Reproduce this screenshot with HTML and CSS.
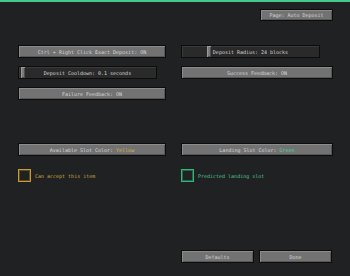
FILE: index.html
```html
<!doctype html>
<html>
<head>
<meta charset="utf-8">
<link rel="stylesheet" href="styles.css">
<title>Auto Deposit</title>
</head>
<body>
<div class="screen">
    <div class="top">
        <button class="btn page">Page: Auto Deposit</button>
    </div>

    <div class="options">
        <button class="btn">Ctrl + Right Click Exact Deposit: ON</button>
        <div class="slider short"><span class="knob knob-radius"></span><span class="label">Deposit Radius: 24 blocks</span></div>
        <div class="slider short"><span class="knob"></span><span class="label">Deposit Cooldown: 0.1 seconds</span></div>
        <button class="btn">Success Feedback: ON</button>
        <button class="btn">Failure Feedback: ON</button>
    </div>

    <div class="colors">
        <button class="btn">Available Slot Color: <span class="yellow">Yellow</span></button>
        <button class="btn">Landing Slot Color: <span class="green">Green</span></button>
        <div class="legend"><span class="box box-yellow"></span><span class="yellow-dim">Can accept this item</span></div>
        <div class="legend"><span class="box box-green"></span><span class="green-dim">Predicted landing slot</span></div>
    </div>

    <div class="bottom">
        <button class="btn small">Defaults</button>
        <button class="btn small">Done</button>
    </div>
</div>
</body>
</html>
```

FILE: styles.css
```css
html, body {
    margin: 0;
    padding: 0;
}
body {
    background-color: #202122;
    font-family: "DejaVu Sans Mono", "Liberation Mono", monospace;
    font-size: 5px;
    color: #d4d4d4;
}
.screen {
    width: 350px;
    height: 276px;
    box-sizing: border-box;
    border-top: 2px solid #45c98e;
    padding: 0 17px 0 18px;
    position: relative;
}
.btn {
    display: flex;
    align-items: center;
    justify-content: center;
    box-sizing: border-box;
    height: 13px;
    margin: 0;
    padding: 0;
    font-family: inherit;
    font-size: 5px;
    color: #d6d6d6;
    background-color: #727272;
    border: 1px solid #0c0c0c;
    box-shadow: inset 1px 1px 0 #8c8c8c, inset -1px -1px 0 #575757;
    white-space: pre;
}
.top {
    display: flex;
    justify-content: flex-end;
    margin-top: 7px;
}
.page {
    width: 73px;
    height: 12px;
}
.options {
    display: grid;
    grid-template-columns: 148px 152px;
    column-gap: 15px;
    row-gap: 8px;
    margin-top: 24px;
}
.slider {
    position: relative;
    display: flex;
    align-items: center;
    justify-content: center;
    box-sizing: border-box;
    height: 13px;
    width: 139px;
    background-color: #2a2a2b;
    border: 1px solid #0c0c0c;
    box-shadow: inset 1px 1px 0 #3a3a3a;
    color: #d6d6d6;
}
.knob {
    position: absolute;
    left: 2px;
    top: 0;
    width: 4px;
    height: 11px;
    background-color: #7a7a7a;
    box-shadow: inset 1px 1px 0 #9a9a9a, inset -1px -1px 0 #4e4e4e;
}
.knob-radius {
    left: 25px;
}
.colors {
    display: grid;
    grid-template-columns: 148px 152px;
    column-gap: 15px;
    row-gap: 13px;
    margin-top: 43px;
}
.legend {
    display: flex;
    align-items: center;
    gap: 4px;
    height: 13px;
}
.box {
    box-sizing: border-box;
    width: 13px;
    height: 13px;
    border-width: 1px;
    border-style: solid;
}
.box-yellow {
    border-color: #c99a2c;
    box-shadow: inset 0 0 0 1px rgba(201, 154, 44, 0.35);
}
.box-green {
    border-color: #2fb878;
    box-shadow: inset 0 0 0 1px rgba(47, 184, 120, 0.45);
}
.yellow {
    color: #dcb545;
}
.green {
    color: #4fd394;
}
.yellow-dim {
    color: #c8a848;
}
.green-dim {
    color: #52c48f;
}
.bottom {
    display: flex;
    justify-content: flex-end;
    gap: 5px;
    margin-top: 68px;
    padding-right: 1px;
}
.small {
    width: 73px;
}
```
